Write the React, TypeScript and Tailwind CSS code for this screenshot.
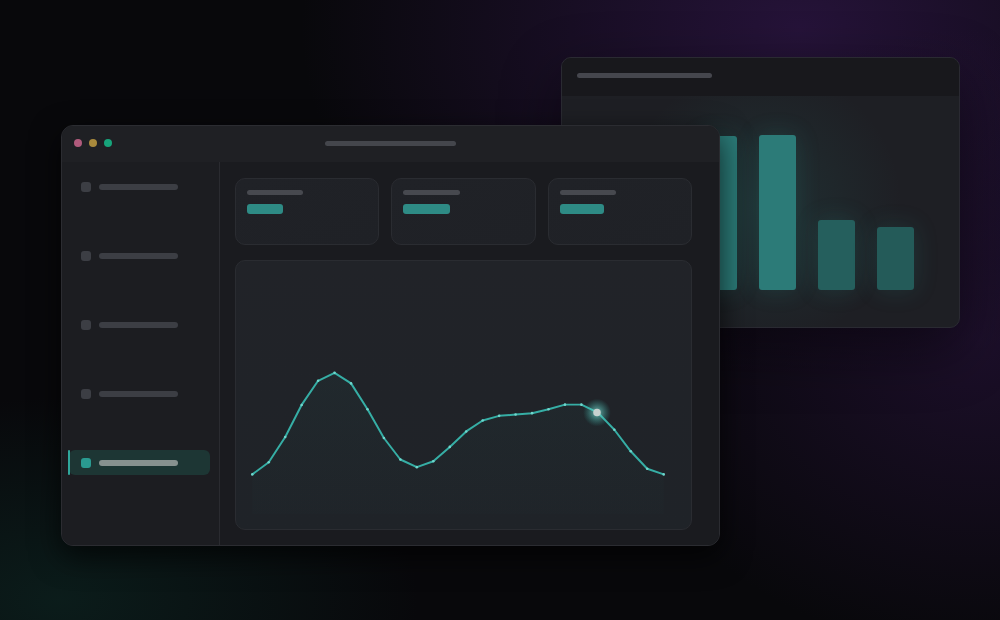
const chartYs = [
  215, 202.7, 177.3, 145, 120.7, 112.7, 123.3, 149.3, 178.3, 200, 207.7, 201.7, 187.3,
  171.7, 160.7, 156, 154.7, 153.3, 149.3, 144.7, 144.7, 152.7, 170, 191.7, 209.3, 215,
];

const points = chartYs.map((y, i) => [15.7 + i * 16.58, y] as const);
const linePath = points.map(([x, y], i) => `${i === 0 ? 'M' : 'L'}${x.toFixed(1)} ${y}`).join(' ');
const areaPath = `${linePath} L${points[points.length - 1][0].toFixed(1)} 255 L${points[0][0]} 255 Z`;

const navItems = [false, false, false, false, true];

const statCards = [
  { label: 'w-[56px]', value: 'w-[36px]' },
  { label: 'w-[57px]', value: 'w-[47px]' },
  { label: 'w-[56px]', value: 'w-[44px]' },
];

const bars = [
  { h: 'h-[120px]', tone: 'bg-[#2a7a77]' },
  { h: 'h-[140px]', tone: 'bg-[#2a7a77]' },
  { h: 'h-[154px]', tone: 'bg-[#2b7b78]' },
  { h: 'h-[155px]', tone: 'bg-[#2c7b78]' },
  { h: 'h-[70px]', tone: 'bg-[#255f5d]' },
  { h: 'h-[63px]', tone: 'bg-[#245b59]' },
];

function LineChart() {
  return (
    <svg viewBox="0 0 457 270" className="absolute inset-0 h-full w-full">
      <defs>
        <linearGradient id="area" x1="0" y1="0" x2="0" y2="1">
          <stop offset="0%" stopColor="#2fb3a8" stopOpacity="0.04" />
          <stop offset="100%" stopColor="#2fb3a8" stopOpacity="0.01" />
        </linearGradient>
        <radialGradient id="glow">
          <stop offset="0%" stopColor="#8ae8dd" stopOpacity="0.75" />
          <stop offset="100%" stopColor="#2fb3a8" stopOpacity="0" />
        </radialGradient>
      </defs>
      <path d={areaPath} fill="url(#area)" />
      <path d={linePath} fill="none" stroke="#36aea5" strokeWidth="2" strokeLinejoin="round" />
      {points.map(([x, y], i) => (
        <circle key={i} cx={x} cy={y} r="1.3" fill="#6fd6cc" />
      ))}
      <circle cx={363} cy={152.7} r="14" fill="url(#glow)" />
      <circle cx={363} cy={152.7} r="3.8" fill="#c9d2d0" />
    </svg>
  );
}

function BackWindow() {
  return (
    <div className="absolute left-[561px] top-[57px] flex h-[271px] w-[399px] flex-col overflow-hidden rounded-[10px] border border-[#2a2a32] bg-[#1e1f24] shadow-[0_20px_60px_rgba(0,0,0,0.45)]">
      <div className="flex h-[38px] shrink-0 items-start bg-[#18181c] px-[15px] pt-[15px]">
        <div className="h-[5px] w-[135px] rounded-full bg-[#45464d]" />
      </div>
      <div className="relative flex flex-1 items-end gap-[22px] bg-[radial-gradient(circle_at_200px_110px,rgba(47,150,140,0.14),transparent_60%)] pb-[37px] pl-[20px]">
        {bars.map((b, i) => (
          <div key={i} className={`w-[37px] rounded-[3px] ${b.h} ${b.tone} shadow-[0_0_24px_rgba(47,160,150,0.18)]`} />
        ))}
      </div>
    </div>
  );
}

function MainWindow() {
  return (
    <div className="absolute left-[61px] top-[125px] flex h-[421px] w-[659px] flex-col overflow-hidden rounded-[12px] border border-[#2b2c31] bg-[#1b1c20] shadow-[0_10px_30px_rgba(0,0,0,0.7)]">
      <div className="grid h-[36px] shrink-0 grid-cols-[1fr_auto_1fr] items-start bg-[#1f2024] px-[12px] pt-[13px]">
        <div className="flex items-center gap-[7px]">
          <span className="h-[8px] w-[8px] rounded-full bg-[#b05a7c]" />
          <span className="h-[8px] w-[8px] rounded-full bg-[#a98a3c]" />
          <span className="h-[8px] w-[8px] rounded-full bg-[#17a47b]" />
        </div>
        <div className="mt-[2px] h-[5px] w-[131px] rounded-full bg-[#44464c]" />
        <div />
      </div>

      <div className="flex flex-1">
        <aside className="flex w-[158px] shrink-0 flex-col gap-[44px] border-r border-[#2a2b30] bg-[#1c1d21] pl-[7px] pt-[12px]">
          {navItems.map((active, i) => (
            <div
              key={i}
              className={`relative flex h-[25px] w-[141px] items-center gap-[8px] rounded-[6px] pl-[12px] ${
                active ? 'bg-[#1d3634]' : ''
              }`}
            >
              {active && <span className="absolute -left-[1px] top-0 h-[25px] w-[2px] rounded-full bg-[#2fa79b]" />}
              <span className={`h-[10px] w-[10px] rounded-[3px] ${active ? 'bg-[#2a9b91]' : 'bg-[#3c3e44]'}`} />
              <span className={`h-[6px] w-[79px] rounded-full ${active ? 'bg-[#87918f]' : 'bg-[#3c3e44]'}`} />
            </div>
          ))}
        </aside>

        <main className="flex flex-1 flex-col gap-[15px] bg-[#1a1b1f] pb-[15px] pl-[15px] pr-[27px] pt-4">
          <div className="grid grid-cols-3 gap-[12px]">
            {statCards.map((c, i) => (
              <div
                key={i}
                className="flex h-[67px] flex-col gap-[9px] rounded-[10px] border border-[#2a2c31] bg-gradient-to-br from-[#202227] to-[#1f2126] p-[11px]"
              >
                <div className={`h-[5px] rounded-full bg-[#47494f] ${c.label}`} />
                <div className={`h-[10px] rounded-[3px] bg-[#2e8b85] ${c.value}`} />
              </div>
            ))}
          </div>
          <div className="relative flex-1 rounded-[10px] border border-[#2a2c31] bg-gradient-to-b from-[#212328] to-[#1f2328]">
            <LineChart />
          </div>
        </main>
      </div>
    </div>
  );
}

export default function App() {
  return (
    <div className="relative h-[620px] w-[1000px] overflow-hidden bg-[#08080b]">
      <div className="absolute inset-0 bg-[radial-gradient(ellipse_640px_440px_at_800px_30px,rgba(62,28,95,0.55),transparent_78%)]" />
      <div className="absolute inset-0 bg-[radial-gradient(ellipse_480px_400px_at_980px_340px,rgba(48,22,72,0.5),transparent_78%)]" />
      <div className="absolute inset-0 bg-[radial-gradient(ellipse_460px_260px_at_60px_600px,rgba(14,48,42,0.5),transparent_78%)]" />
      <BackWindow />
      <MainWindow />
    </div>
  );
}
